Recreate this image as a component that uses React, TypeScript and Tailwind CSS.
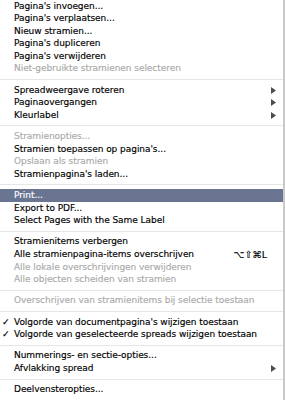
import React from "react";

type Item =
  | { t: "sep" }
  | { t: "item"; label: string; disabled?: boolean; sub?: boolean; check?: boolean; hl?: boolean; sc?: string };

const items: Item[] = [
  { t: "item", label: "Pagina's invoegen..." },
  { t: "item", label: "Pagina's verplaatsen..." },
  { t: "item", label: "Nieuw stramien..." },
  { t: "item", label: "Pagina's dupliceren" },
  { t: "item", label: "Pagina's verwijderen" },
  { t: "item", label: "Niet-gebruikte stramienen selecteren", disabled: true },
  { t: "sep" },
  { t: "item", label: "Spreadweergave roteren", sub: true },
  { t: "item", label: "Paginaovergangen", sub: true },
  { t: "item", label: "Kleurlabel", sub: true },
  { t: "sep" },
  { t: "item", label: "Stramienopties...", disabled: true },
  { t: "item", label: "Stramien toepassen op pagina's..." },
  { t: "item", label: "Opslaan als stramien", disabled: true },
  { t: "item", label: "Stramienpagina's laden..." },
  { t: "sep" },
  { t: "item", label: "Print...", hl: true },
  { t: "item", label: "Export to PDF..." },
  { t: "item", label: "Select Pages with the Same Label" },
  { t: "sep" },
  { t: "item", label: "Stramienitems verbergen" },
  { t: "item", label: "Alle stramienpagina-items overschrijven", sc: "⌥⇧⌘L" },
  { t: "item", label: "Alle lokale overschrijvingen verwijderen", disabled: true },
  { t: "item", label: "Alle objecten scheiden van stramien", disabled: true },
  { t: "sep" },
  { t: "item", label: "Overschrijven van stramienitems bij selectie toestaan", disabled: true },
  { t: "sep" },
  { t: "item", label: "Volgorde van documentpagina's wijzigen toestaan", check: true },
  { t: "item", label: "Volgorde van geselecteerde spreads wijzigen toestaan", check: true },
  { t: "sep" },
  { t: "item", label: "Nummerings- en sectie-opties..." },
  { t: "item", label: "Afvlakking spread", sub: true },
  { t: "sep" },
  { t: "item", label: "Deelvensteropties..." },
];

function Arrow({ light }: { light?: boolean }) {
  return (
    <svg width="5" height="7" viewBox="0 0 5 7" className="block">
      <polygon points="0,0 5,3.5 0,7" fill={light ? "#ffffff" : "#4d4d4d"} />
    </svg>
  );
}

export default function App() {
  return (
    <div
      className="w-[285px] h-[400px] overflow-hidden bg-white border-r-2 border-[#c9c9c9] flex flex-col"
      style={{ fontFamily: '"DejaVu Sans", sans-serif' }}
    >
      <div className="flex flex-col mt-[-0.3px]">
        {items.map((it, i) =>
          it.t === "sep" ? (
            <div key={i} className="h-[8.6px] flex items-center">
              <div className="h-px w-full bg-[#e6e6e6]" />
            </div>
          ) : (
            <div
              key={i}
              className={
                "h-[12.6px] flex items-center relative text-[9px] leading-none whitespace-nowrap tracking-[-0.05px] [-webkit-text-stroke:0.15px_currentColor] " +
                (it.hl ? "bg-[#6a7691] text-white" : it.disabled ? "text-[#aaaaaa]" : "text-black")
              }
            >
              {it.check && <span className="absolute left-[2px] text-[9px]">✓</span>}
              <span className="pl-[14px]">{it.label}</span>
              {it.sc && <span className="absolute right-[16px] text-[9.5px]">{it.sc}</span>}
              {it.sub && (
                <span className="absolute right-[7px]">
                  <Arrow light={it.hl} />
                </span>
              )}
            </div>
          )
        )}
      </div>
    </div>
  );
}
